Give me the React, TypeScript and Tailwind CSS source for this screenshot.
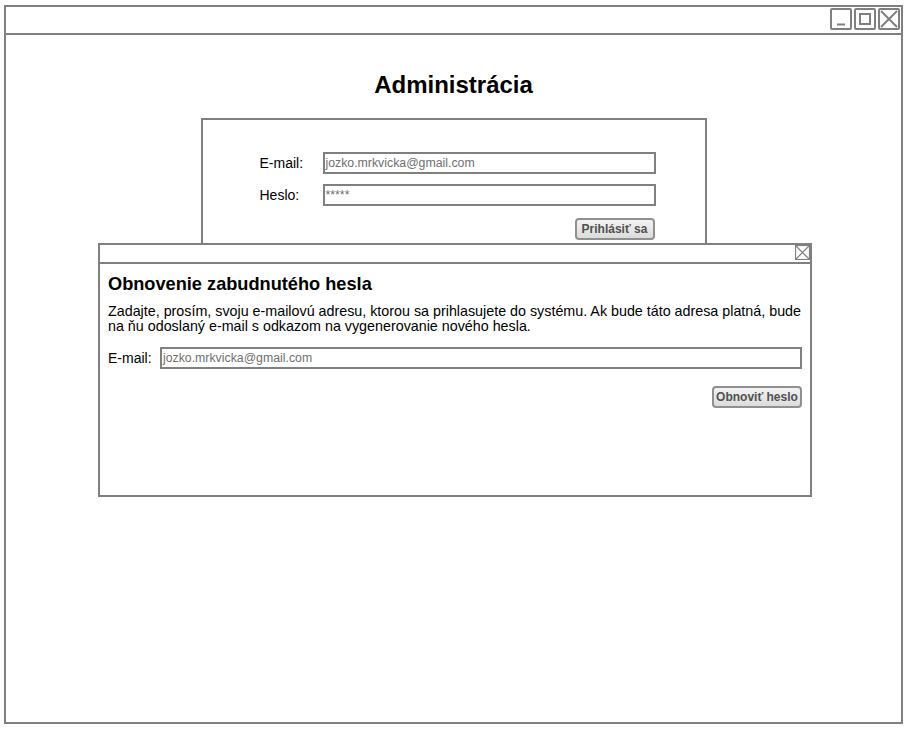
import React from "react";

const font = { fontFamily: '"Liberation Sans", Arial, sans-serif' };

function WinBtn({ kind }: { kind: "min" | "max" | "close" }) {
  return (
    <div className="w-[22px] h-[22px] border-2 border-[#808080] rounded-[2px] bg-white flex items-center justify-center">
      {kind === "min" && (
        <svg width="18" height="18" viewBox="0 0 18 18">
          <line x1="5" y1="14.5" x2="13" y2="14.5" stroke="#808080" strokeWidth="2" />
        </svg>
      )}
      {kind === "max" && (
        <svg width="18" height="18" viewBox="0 0 18 18">
          <rect x="4" y="4" width="10" height="10" fill="none" stroke="#808080" strokeWidth="2" />
        </svg>
      )}
      {kind === "close" && (
        <svg width="18" height="18" viewBox="0 0 18 18">
          <line x1="1" y1="1" x2="17" y2="17" stroke="#808080" strokeWidth="2" />
          <line x1="17" y1="1" x2="1" y2="17" stroke="#808080" strokeWidth="2" />
        </svg>
      )}
    </div>
  );
}

function Input({ value, className }: { value: string; className: string }) {
  return (
    <div
      className={
        "h-[22px] border-2 border-[#808080] bg-white flex items-center pl-[1px] text-[12.3px] text-[#707070] leading-none " +
        className
      }
    >
      {value}
    </div>
  );
}

function Btn({ label, className }: { label: string; className: string }) {
  return (
    <div
      className={
        "h-[22px] border-2 border-[#909090] rounded-[4px] bg-gradient-to-b from-[#f2f2f2] to-[#dcdcdc] flex items-center justify-center text-[12px] font-bold text-[#505050] leading-none " +
        className
      }
    >
      {label}
    </div>
  );
}

export default function App() {
  return (
    <div className="relative w-[924px] h-[744px] bg-white overflow-hidden" style={font}>
      <div className="pt-[5px] pl-[4px]">
        <div className="w-[899px] h-[719px] border-2 border-[#808080] flex flex-col">
          {/* title bar */}
          <div className="h-[28px] border-b-2 border-[#808080] flex justify-end items-start pt-[1px] pr-[1px] gap-[2px]">
            <WinBtn kind="min" />
            <WinBtn kind="max" />
            <WinBtn kind="close" />
          </div>
          {/* content */}
          <div className="flex flex-col items-center">
            <div className="mt-[37px] h-[26px] leading-[26px] text-[24px] font-bold text-black">
              Administrácia
            </div>
            <div className="mt-[20px] w-[506px] h-[200px] border-2 border-[#808080] pt-[32px] pl-[57px] flex flex-col">
              <div className="flex items-center h-[22px]">
                <div className="w-[63px] text-[14px] text-black leading-none">E-mail:</div>
                <Input value="jozko.mrkvicka@gmail.com" className="w-[333px]" />
              </div>
              <div className="flex items-center h-[22px] mt-[10px]">
                <div className="w-[63px] text-[14px] text-black leading-none">Heslo:</div>
                <Input value="*****" className="w-[333px]" />
              </div>
              <div className="flex w-[395px] justify-end mt-[12px]">
                <Btn label="Prihlásiť sa" className="w-[80px]" />
              </div>
            </div>
          </div>
        </div>
      </div>

      {/* dialog */}
      <div className="absolute left-[98px] top-[243px] w-[714px] h-[254px] border-2 border-[#808080] bg-white flex flex-col">
        <div className="h-[19px] border-b-2 border-[#808080] flex justify-end items-start">
          <svg width="15" height="15" viewBox="0 0 15 15">
            <rect x="0.5" y="0.5" width="14" height="14" fill="none" stroke="#808080" strokeWidth="1.2" />
            <line x1="1" y1="1" x2="14" y2="14" stroke="#808080" strokeWidth="1.2" />
            <line x1="14" y1="1" x2="1" y2="14" stroke="#808080" strokeWidth="1.2" />
          </svg>
        </div>
        <div className="px-[8px] pt-[10px] flex flex-col">
          <div className="h-[20px] leading-[20px] text-[18.2px] font-bold text-black">
            Obnovenie zabudnutého hesla
          </div>
          <div className="mt-[10px] text-[14.3px] leading-[15px] text-black whitespace-nowrap">
            Zadajte, prosím, svoju e-mailovú adresu, ktorou sa prihlasujete do systému. Ak bude táto adresa platná, bude
            <br />
            na ňu odoslaný e-mail s odkazom na vygenerovanie nového hesla.
          </div>
          <div className="mt-[13px] flex items-center h-[22px]">
            <div className="w-[52px] text-[14px] text-black leading-none">E-mail:</div>
            <Input value="jozko.mrkvicka@gmail.com" className="w-[642px]" />
          </div>
          <div className="mt-[17px] flex justify-end w-[694px]">
            <Btn label="Obnoviť heslo" className="w-[90px]" />
          </div>
        </div>
      </div>
    </div>
  );
}
